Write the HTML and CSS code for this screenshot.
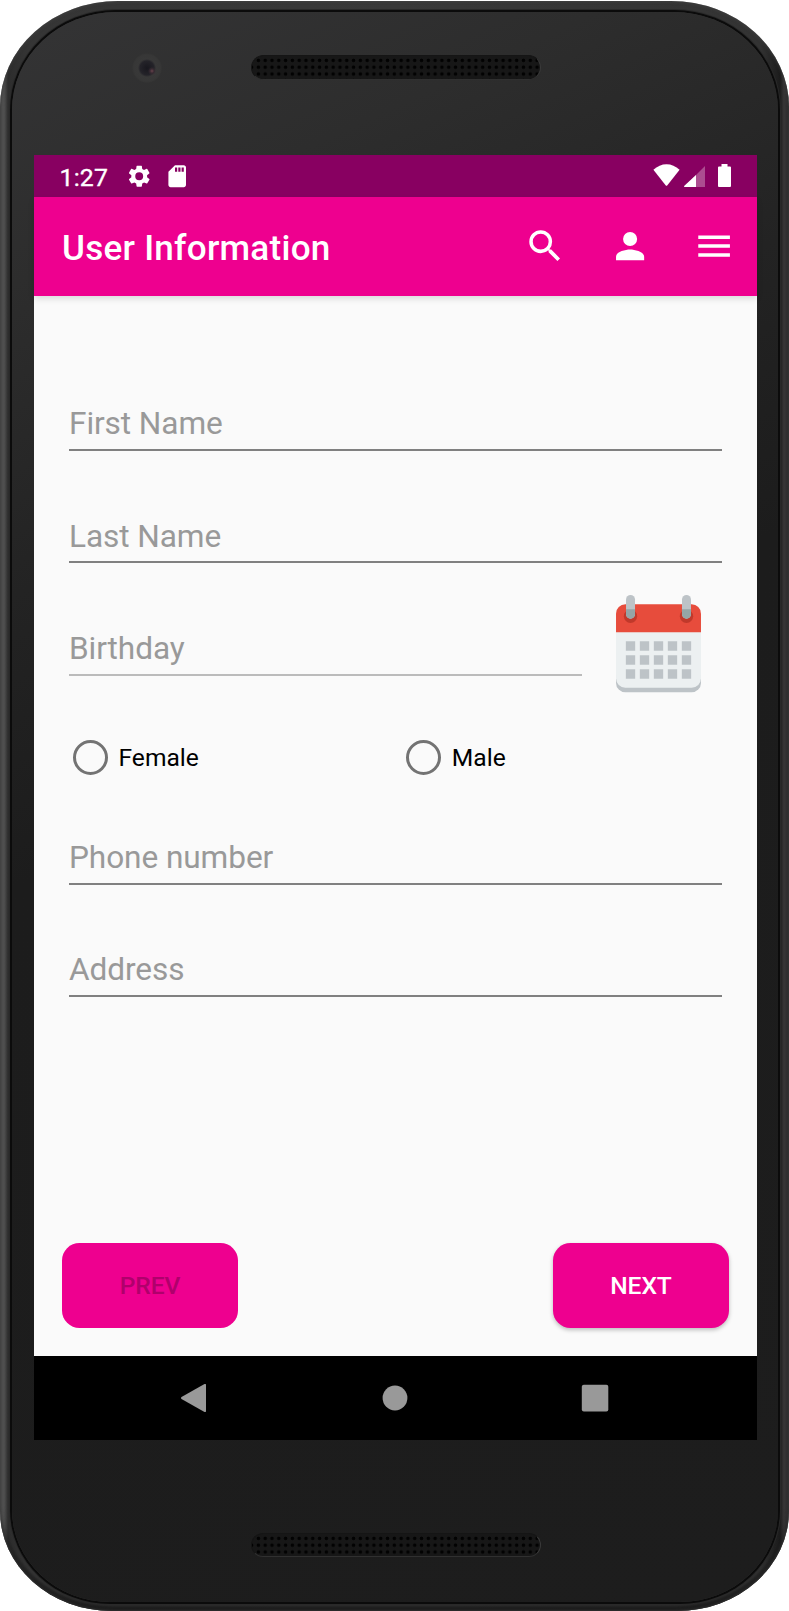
FILE: index.html
```html
<!DOCTYPE html>
<html lang="en">
<head>
<meta charset="utf-8">
<title>User Information</title>
<link rel="stylesheet" href="styles.css">
</head>
<body>
<div class="phone">
  <div class="panel">
    <div class="bezel top">
      <span class="camera"></span>
      <span class="speaker"></span>
    </div>
    <div class="screen">
      <div class="status">
        <span class="time">1:27</span>
        <svg class="gear" viewBox="0 0 24 24"><path d="M19.14 12.94c.04-.3.06-.61.06-.94s-.02-.64-.07-.94l2.03-1.58a.49.49 0 0 0 .12-.61l-1.92-3.32a.49.49 0 0 0-.59-.22l-2.39.96a7 7 0 0 0-1.62-.94L14.4 2.81a.48.48 0 0 0-.48-.41h-3.84a.47.47 0 0 0-.47.41l-.36 2.54c-.59.24-1.13.57-1.62.94l-2.39-.96a.48.48 0 0 0-.59.22L2.74 8.87a.47.47 0 0 0 .12.61l2.03 1.58a5.900 5.900 0 0 0 0 1.880l-2.030 1.580a.49.49 0 0 0-.12.61l1.920 3.320c.12.22.37.29.59.22l2.390-.960c.5.38 1.030.7 1.620.940l.360 2.540c.050.240.240.410.480.410h3.840c.240 0 .440-.170.470-.410l.360-2.540c.590-.240 1.130-.560 1.620-.940l2.390.960c.220.080.470 0 .590-.220l1.920-3.320a.47.47 0 0 0-.12-.610zM12 15.600a3.600 3.600 0 1 1 0-7.200 3.600 3.600 0 0 1 0 7.200z"/></svg>
        <svg class="sd" viewBox="0 0 24 24"><path d="M18 2h-8L4.020 8 4 20c0 1.100.9 2 2 2h12c1.100 0 2-.9 2-2V4c0-1.100-.9-2-2-2zm-6 6h-2V4h2zm3 0h-2V4h2zm3 0h-2V4h2z"/></svg>
        <svg class="wifi" viewBox="0 0 27 22"><path d="M.4 5.800C8-1.700 19-1.700 26.600 5.800L14.400 21.200q-.9 1-1.800 0z"/></svg>
        <svg class="cell" viewBox="0 0 21 21"><path opacity=".3" d="M21 0v21H0z"/><path d="M12 9v12H1q-1.500-.2-.6-1.300z"/></svg>
        <svg class="battery" viewBox="0 0 13 23"><path d="M3.500 0h6v2.500H12q1 0 1 1V22q0 1-1 1H1q-1 0-1-1V3.500q0-1 1-1h2.500z"/></svg>
      </div>
      <div class="appbar">
        <h1>User Information</h1>
        <svg viewBox="0 0 24 24"><path d="M15.500 14h-.790l-.280-.270A6.470 6.470 0 0 0 16 9.500 6.500 6.500 0 1 0 9.500 16c1.610 0 3.090-.590 4.230-1.570l.270.280v.790l5 4.990L20.490 19zm-6 0a4.500 4.500 0 1 1 0-9 4.500 4.500 0 0 1 0 9z"/></svg>
        <svg viewBox="0 0 24 24"><path d="M12 12a4 4 0 1 0 0-8 4 4 0 0 0 0 8zm0 2c-2.670 0-8 1.340-8 4v2h16v-2c0-2.660-5.330-4-8-4z"/></svg>
        <svg viewBox="0 0 24 24"><path d="M3 18h18v-2H3zm0-5h18v-2H3zm0-7v2h18V6z"/></svg>
      </div>
      <div class="form">
        <div class="row"><div class="field">First Name</div></div>
        <div class="row"><div class="field">Last Name</div></div>
        <div class="row">
          <div class="field light">Birthday</div>
          <svg class="calendar" viewBox="0 0 255 292">
            <path fill="#bdc3c7" d="M0 240h255v24a28 28 0 0 1-28 28H28a28 28 0 0 1-28-28z"/>
            <path fill="#ecf0f1" d="M0 100h255v150a28 28 0 0 1-28 28H28a28 28 0 0 1-28-28z"/>
            <path fill="#e74c3c" d="M0 112V56a28 28 0 0 1 28-28h199a28 28 0 0 1 28 28v56z"/>
            <g fill="#c0392b"><circle cx="43.500" cy="64" r="20"/><circle cx="211.500" cy="64" r="20"/></g>
            <g fill="#bdc3c7"><rect x="30" width="27" height="71" rx="13.500"/><rect x="198" width="27" height="71" rx="13.500"/></g>
            <path fill="#95a5a6" d="M30 43h27v14.500a13.500 13.500 0 0 1-27 0zM198 43h27v14.500a13.500 13.500 0 0 1-27 0z"/>
            <path stroke="#bdc3c7" stroke-width="28" stroke-dasharray="28 14" d="M29.500 153h198M29.500 195h198M29.500 237h198"/>
          </svg>
        </div>
        <div class="radios">
          <div class="radio"><span class="ring"></span>Female</div>
          <div class="radio"><span class="ring"></span>Male</div>
        </div>
        <div class="row"><div class="field">Phone number</div></div>
        <div class="row"><div class="field">Address</div></div>
        <div class="actions">
          <div class="button disabled">PREV</div>
          <div class="button">NEXT</div>
        </div>
      </div>
      <div class="nav">
        <svg viewBox="0 0 28 28"><path d="M24.500 0q1.500-.4 1.500 1v26q0 1.400-1.500 1L1.500 15q-1-1 0-2z"/></svg>
        <svg viewBox="0 0 28 28"><circle cx="14" cy="14" r="12.400"/></svg>
        <svg viewBox="0 0 28 28"><rect x=".8" y=".7" width="26.500" height="26.800" rx="2"/></svg>
      </div>
    </div>
    <div class="bezel bottom"><span class="speaker"></span></div>
  </div>
</div>
</body>
</html>
```
FILE: styles.css
```css
* { box-sizing: border-box; }
body { margin: 0; background: #fff; font-family: Roboto, "Liberation Sans", sans-serif; }
.phone {
  width: 789px; height: 1610px; margin-top: 1px; padding: 11px 11px 9px 12px;
  border-radius: 118px 118px 112px 112px / 106px 106px 100px 100px;
  background: linear-gradient(90deg, #626262 0, #525252 4px, #2d2d2d 8px, #353535 30px, #393939 50%, #333 760px, #1c1c1c 780px, #383637 784px, #302f30 100%);
  box-shadow: inset 0 0 3px 1px rgba(70, 70, 70, .6), inset 0 -5px 4px #171717;
}
.panel {
  height: 1590px; padding: 0 21px 0 22px;
  border-radius: 104px 104px 98px 98px / 98px 98px 92px 92px;
  background: linear-gradient(155deg, #343435 0, #2d2d2d 14%, #232323 30%, #1c1c1c 45%, #1d1d1d 100%);
  box-shadow: 0 0 0 2px #0b0b0b, 0 0 0 3px #292929;
}
.bezel { display: flex; }
.top { height: 143px; }
.bottom { padding: 93px 0 0 216.500px; }
.camera {
  width: 30px; height: 30px; margin: 41px 0 0 98px; border-radius: 50%;
  background: radial-gradient(circle at 20px 18px, #68434c 0, #382a32 2px, transparent 4px), radial-gradient(circle at 50% 50%, #18171e 0, #242329 7px, #383838 9px, #373737 13px, #333 15px);
}
.top .speaker { height: 25px; margin: 43px 0 0 88.500px; }
.speaker {
  width: 290px; height: 24px; border-radius: 12.500px;
  border: 1px solid #151515; border-bottom-color: #303030; border-right-color: #3a3a3a;
  background: radial-gradient(circle, #020202 0 1.500px, transparent 2.100px) 3px 1px / 6.800px 6.800px, #171717;
}
.screen { width: 723px; height: 1285px; display: flex; flex-direction: column; background: #fafafa; }
.status { height: 42px; padding: 9px 26px 0 25.500px; display: flex; background: #880061; color: #fff; }
.status svg, .appbar svg { fill: #fff; flex: none; }
.time { width: 66px; font-size: 24.800px; line-height: 28px; letter-spacing: .2px; -webkit-text-stroke: .35px #fff; }
.gear, .sd { width: 26.400px; height: 26.400px; margin-top: -1px; }
.sd { margin-left: 12.500px; }
.wifi { width: 27px; height: 22px; margin-left: auto; }
.cell { width: 21px; height: 21px; margin: 2px 13px 0 4px; }
.battery { width: 13px; height: 23px; }
.appbar {
  height: 98.500px; padding: 0 21.500px 0 28px; display: flex; align-items: center; gap: 42.500px;
  background: #ee008f; color: #fff; box-shadow: 0 3px 6px rgba(0, 0, 0, .12); flex: none;
}
.appbar h1 { margin: 4px auto 0 0; font-size: 35.100px; line-height: 42px; font-weight: 500; letter-spacing: .25px; white-space: nowrap; }
.appbar svg { width: 42.200px; height: 42.200px; margin-top: -.5px; }
.form { flex: 1; min-height: 0; display: flex; flex-direction: column; padding: 43px 28px 28.500px; }
.row { height: 112.400px; margin: 0 7px; display: flex; align-items: flex-end; flex: none; }
.field { flex: 1; height: 46.500px; border-bottom: 2px solid #808080; color: #999; font-size: 31.600px; line-height: 39.500px; letter-spacing: -.08px; }
.light { border-color: #bbb; }
.calendar { width: 85px; height: 97.300px; margin: 0 21px -17px 34.500px; flex: none; }
.radios { height: 96.500px; padding: 64px 0 0 11px; display: flex; flex: none; }
.radio { width: 333.300px; height: 35.500px; display: flex; align-items: center; gap: 10.500px; flex: none; font-size: 24.600px; line-height: 37.500px; color: #000; }
.radio + .radio { width: auto; }
.ring { width: 35px; height: 35px; border: 3.500px solid #737373; border-radius: 50%; flex: none; }
.actions { margin-top: auto; display: flex; justify-content: space-between; }
.button {
  width: 176px; height: 84.500px; border-radius: 17.500px; background: #ee008f; color: #fff;
  font-size: 24.600px; font-weight: 500; line-height: 86px; letter-spacing: -.1px; text-align: center;
  box-shadow: 0 2px 4px rgba(0, 0, 0, .25);
}
.disabled { color: #b0006c; box-shadow: none; }
.nav { height: 84px; background: #000; display: flex; align-items: center; justify-content: space-between; padding: 0 148px 0 146px; flex: none; }
.nav svg { width: 28px; height: 28px; fill: #999; }
```
